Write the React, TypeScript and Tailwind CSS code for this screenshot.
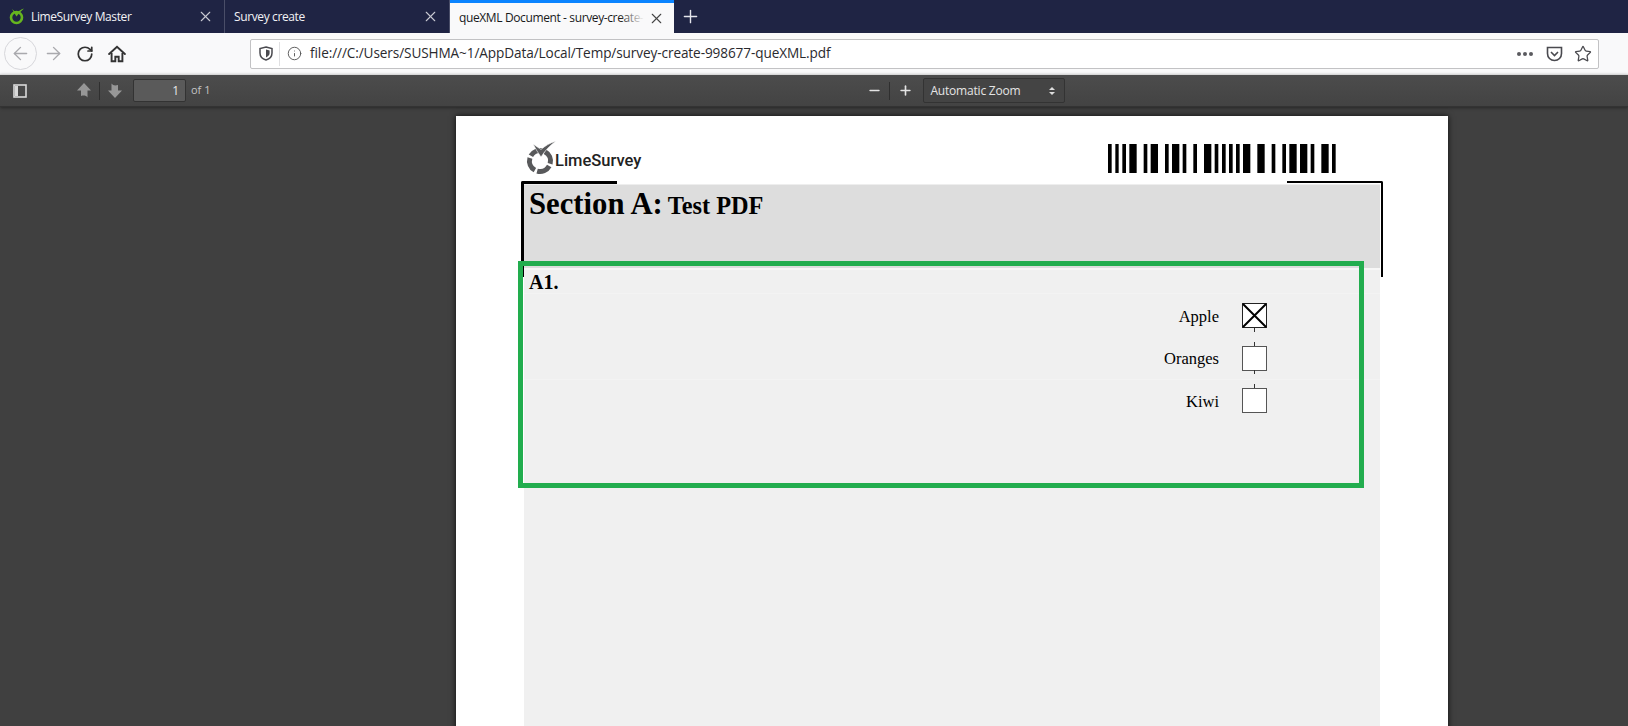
import React from "react";
import { ArrowLeft, ArrowRight, RotateCw, Plus, X, Info, Star, Minus } from "lucide-react";

const uiFont = "font-['Open_Sans','Noto_Sans',sans-serif]";

function LogoMark() {
  return (
    <svg width="32" height="34" viewBox="0 0 32 34" fill="none">
      <circle cx="15" cy="20" r="10.5" stroke="#58595b" strokeWidth="5" strokeDasharray="14 2.5" transform="rotate(-62 15 20)" />
      <path d="M8 3 L16 8.5 C20 4.8 25 2 31 0 C25 4.5 20 9.5 16 16 L12 10 Z" fill="#58595b" stroke="#fff" strokeWidth="0.6" />
    </svg>
  );
}

function Favicon() {
  return (
    <svg width="16" height="18" viewBox="0 0 16 18" fill="none">
      <circle cx="7.5" cy="10.5" r="5.5" stroke="#66b51f" strokeWidth="2.6" />
      <path d="M3 2 L7.5 6 C9.5 4 12 2.5 15 1.5 C12 4 10 6.5 7.5 9.5 L5 5.5 Z" fill="#66b51f" />
    </svg>
  );
}

function BlockArrow({ down }: { down?: boolean }) {
  return (
    <svg width="16" height="17" viewBox="0 0 16 17" className={down ? "rotate-180" : ""}>
      <path d="M8 1 L15 8.5 H11.5 V15.5 C10 13.5 8 13.2 5 14 V8.5 H1 Z" fill="#979797" />
    </svg>
  );
}

function Tab({ title, active, favicon, fade }: { title: string; active?: boolean; favicon?: boolean; fade?: boolean }) {
  return (
    <div
      className={
        active
          ? "w-[224px] h-[33px] bg-[#f9f9fa] border-t-[3px] border-[#0a84ff] text-[#18191a] flex items-center pl-[9px] pr-[9px]"
          : "w-[225px] h-[33px] border-r border-[#4a4e68] text-[#f2f2f5] flex items-center pl-[9px] pr-[10px]"
      }
    >
      {favicon && (
        <span className="mr-[6px] shrink-0 -mt-[1px]">
          <Favicon />
        </span>
      )}
      <span className="flex-1 min-w-0 overflow-hidden whitespace-nowrap text-[12px] tracking-[-0.38px] relative">
        {title}
        {fade && <span className="absolute right-0 top-0 bottom-0 w-[24px] bg-gradient-to-r from-transparent to-[#f9f9fa]" />}
      </span>
      <X size={17} strokeWidth={1.5} className={active ? "text-[#444] shrink-0 ml-[4px]" : "text-[#c8c9d2] shrink-0 ml-[4px]"} />
    </div>
  );
}

const bars = [
  [84, 95], [106, 116], [127, 138], [148, 170], [191, 202], [212, 234], [255, 266], [276, 298],
  [308, 319], [340, 351], [372, 394], [404, 415], [426, 437], [447, 458], [468, 479], [489, 511],
  [532, 554], [575, 586], [607, 618], [628, 650], [660, 682], [692, 703], [724, 746], [756, 767],
];

function Barcode() {
  return (
    <svg width="228" height="29" viewBox="84 0 684 87" preserveAspectRatio="none">
      {bars.map(([a, b]) => (
        <rect key={a} x={a} y="0" width={b - a} height="87" fill="#000" />
      ))}
    </svg>
  );
}

function Option({ label, checked }: { label: string; checked?: boolean }) {
  return (
    <div className="h-[25px] flex items-center justify-end gap-[23px]">
      <span className="text-[16.5px] leading-none text-black mt-[3px]">{label}</span>
      <span className="relative w-[25px] h-[25px] bg-white border border-[#555] shrink-0">
        {checked && (
          <svg className="absolute -inset-px" width="25" height="25" viewBox="0 0 25 25">
            <rect x="0.5" y="0.5" width="24" height="24" fill="none" stroke="#222" />
            <path d="M1 1 L24 24 M24 1 L1 24" stroke="#000" strokeWidth="2" />
          </svg>
        )}
      </span>
    </div>
  );
}

export default function App() {
  return (
    <div className={`w-[1628px] h-[726px] overflow-hidden flex flex-col ${uiFont}`}>
      {/* tab strip */}
      <div className="h-[33px] shrink-0 bg-[#1f2444] flex items-start">
        <Tab title="LimeSurvey Master" favicon />
        <Tab title="Survey create" />
        <Tab title="queXML Document - survey-create-998677-queXML.pdf" active fade />
        <Plus size={21} strokeWidth={1.6} className="text-[#e4e5ec] ml-[6px] mt-[6px]" />
      </div>

      {/* nav bar */}
      <div className="h-[41px] shrink-0 bg-[#f9f9fa] flex items-center pl-[4px] pr-[29px]">
        <div className="w-[33px] h-[33px] rounded-full border border-[#d7d7db] flex items-center justify-center">
          <ArrowLeft size={21} strokeWidth={1.6} className="text-[#a9a9ad]" />
        </div>
        <ArrowRight size={21} strokeWidth={1.6} className="text-[#a9a9ad] ml-[6px]" />
        <RotateCw size={18} strokeWidth={2.3} className="text-[#333] ml-[12px]" />
        <svg className="ml-[14px]" width="18" height="18" viewBox="0 0 16 16" fill="none" stroke="#333" strokeWidth="1.7">
          <path d="M1 8 L8 1.5 L15 8" strokeLinecap="round" />
          <path d="M3.2 7 V14.5 H6.5 V10.5 H9.5 V14.5 H12.8 V7" />
        </svg>
        <div className="ml-[124px] flex-1 h-[30px] bg-white border border-[#c2c2c4] rounded-[2px] flex items-center">
          <svg className="ml-[8px]" width="14" height="15" viewBox="0 0 14 15" fill="none">
            <path d="M7 1 L13 2.5 V7 C13 10.5 10.5 13 7 14 C3.5 13 1 10.5 1 7 V2.5 Z" stroke="#4a4a4f" strokeWidth="1.5" />
            <path d="M7 3.5 L10.6 4.4 V7 C10.6 9 9.2 10.5 7 11.4 Z" fill="#4a4a4f" />
          </svg>
          <span className="ml-[6px] w-px h-[24px] bg-[#e0e0e2]" />
          <Info size={15} strokeWidth={1.5} className="text-[#555] ml-[7px]" />
          <span className="ml-[8px] text-[13.6px] text-[#2a2a2e] tracking-[-0.1px] whitespace-nowrap">
            file:///C:/Users/SUSHMA~1/AppData/Local/Temp/survey-create-998677-queXML.pdf
          </span>
          <span className="flex-1" />
          <span className="flex gap-[2px] mr-[13px]">
            <i className="w-[4px] h-[4px] rounded-full bg-[#5a5a5f]" />
            <i className="w-[4px] h-[4px] rounded-full bg-[#5a5a5f]" />
            <i className="w-[4px] h-[4px] rounded-full bg-[#5a5a5f]" />
          </span>
          <svg className="mr-[11px]" width="17" height="16" viewBox="0 0 17 16" fill="none" stroke="#4a4a4f" strokeWidth="1.6">
            <path d="M1.5 1.5 H15.5 V7.5 C15.5 11.5 12.5 14.5 8.5 14.5 C4.5 14.5 1.5 11.5 1.5 7.5 Z" />
            <path d="M5 6 L8.5 9.5 L12 6" />
          </svg>
          <Star size={18} strokeWidth={1.7} className="text-[#4a4a4f] mr-[6px]" />
        </div>
      </div>

      {/* pdf toolbar */}
      <div className="h-[33px] shrink-0 bg-gradient-to-b from-[#4c4c4c] to-[#434343] border-b border-[#333] border-t border-t-[#d8d8d8] flex items-center text-[#d9d9d9] relative z-10 shadow-[0_1px_3px_rgba(0,0,0,0.4)]">
        <svg className="ml-[13px]" width="14" height="14" viewBox="0 0 14 14" fill="none" stroke="#d9d9d9" strokeWidth="1.6">
          <rect x="1" y="1" width="12" height="12" />
          <rect x="2" y="2" width="3" height="10" fill="#d9d9d9" stroke="none" />
        </svg>
        <span className="ml-[49px]">
          <BlockArrow />
        </span>
        <span className="ml-[7px] w-px h-[18px] bg-[#2f2f2f]" />
        <span className="ml-[7px]">
          <BlockArrow down />
        </span>
        <div className="ml-[10px] w-[53px] h-[23px] bg-[#5a5a5a] border border-[#333] rounded-[2px] flex items-center justify-end pr-[6px] text-[12px] text-[#e8e8e8]">
          1
        </div>
        <span className="ml-[5px] text-[11px] text-[#c4c4c4]">of 1</span>
        <Minus size={15} strokeWidth={2.6} className="text-[#e4e4e4] ml-[657px]" />
        <span className="ml-[7px] w-px h-[18px] bg-[#2f2f2f]" />
        <Plus size={15} strokeWidth={2.6} className="text-[#e4e4e4] ml-[8px]" />
        <div className="ml-[10px] w-[142px] h-[25px] bg-[#444] border border-[#333] rounded-[2px] flex items-center pl-[6px] pr-[9px] text-[12px] tracking-[-0.2px] text-[#e4e4e4]">
          <span className="flex-1">Automatic Zoom</span>
          <span className="flex flex-col gap-[2px]">
            <i className="w-0 h-0 border-x-[3px] border-x-transparent border-b-[3px] border-b-[#ddd]" />
            <i className="w-0 h-0 border-x-[3px] border-x-transparent border-t-[3px] border-t-[#ddd]" />
          </span>
        </div>
      </div>

      {/* viewer */}
      <div className="flex-1 min-h-0 bg-[#404040] pl-[456px] pr-[180px] pt-[9px] overflow-hidden">
        <div className="relative h-[640px] bg-white shadow-[0_0_6px_rgba(0,0,0,0.8)] flex flex-col font-['Liberation_Serif',serif] text-black">
          <div className="h-[68px] shrink-0 flex items-start justify-between pl-[69px] pr-[112px] pt-[25px]">
            <div className="flex items-end -space-x-[2px]">
              <LogoMark />
              <span className="font-['Roboto',sans-serif] font-medium text-[16.5px] leading-[20px] text-[#222] mb-[4px]">LimeSurvey</span>
            </div>
            <div className="mt-[3px]">
              <Barcode />
            </div>
          </div>
          <div className="ml-[68px] mr-[68px] flex-1 flex flex-col">
            <div className="h-[84px] shrink-0 bg-[#dddddd] border-t border-[#eeeeee] pl-[5px] pt-[2px]">
              <div className="font-bold leading-[34px] whitespace-nowrap">
                <span className="text-[30.7px]">Section A:</span>{" "}
                <span className="text-[24.3px] ml-[1px]">Test PDF</span>
              </div>
            </div>
            <div className="flex-1 bg-[#f0f0f0] border-t-[2px] border-[#f7f7f7]">
              <div className="pl-[5px] text-[20px] font-bold leading-[24px] h-[24px] border-b border-[#f3f3f3]">A1.</div>
              <div className="mt-[9px] pr-[113px] flex flex-col gap-[17.5px]">
                <Option label="Apple" checked />
                <Option label="Oranges" />
                <Option label="Kiwi" />
              </div>
            </div>
          </div>

          {/* row separator */}
          <div className="absolute left-[68px] right-[68px] top-[263px] h-px bg-[#f3f3f3]" />

          {/* registration corners */}
          <div className="absolute left-[65px] top-[65px] w-[96px] h-[96px] border-l-[3px] border-t-[3px] border-black rounded-tl-[2px]" />
          <div className="absolute left-[831px] top-[65px] w-[96px] h-[96px] border-r-[2px] border-t-[2px] border-black rounded-tr-[2px]" />

          {/* connectors between boxes */}
          <div className="absolute left-[798px] top-[212px] w-px h-[4px] bg-[#333]" />
          <div className="absolute left-[798px] top-[226px] w-px h-[4px] bg-[#333]" />
          <div className="absolute left-[798px] top-[254px] w-px h-[4px] bg-[#333]" />
          <div className="absolute left-[798px] top-[268px] w-px h-[4px] bg-[#333]" />

          {/* annotation */}
          <div className="absolute left-[62px] top-[145px] w-[846px] h-[227px] border-[5px] border-[#22ad4e]" />
        </div>
      </div>
    </div>
  );
}
